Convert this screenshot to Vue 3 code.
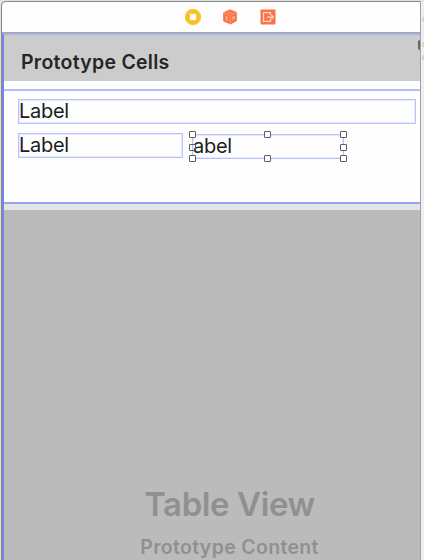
<script setup>
const handles = ['tl', 'tc', 'tr', 'ml', 'mr', 'bl', 'bc', 'br']
</script>

<template>
  <div class="canvas">
    <div class="scene">
      <header class="dock">
        <svg width="18" height="18" viewBox="0 0 18 18">
          <circle cx="9" cy="9" r="8.2" fill="#fbc62f" />
          <circle cx="9" cy="9" r="5.8" fill="none" stroke="#eeb323" stroke-width=".8" />
          <rect x="6" y="6" width="6" height="6" rx=".8" fill="#fff" />
        </svg>
        <svg width="18" height="18" viewBox="0 0 18 18">
          <path d="M8.8 1.8 15.3 4.4V12.8L9.5 16 2.7 13V4.8Z" fill="#fa7448" stroke="#fa7448" stroke-linejoin="round" />
          <path d="M2.8 5 9.3 7.5 15.2 4.7M9.3 7.5V15.8M6 3.6l5.8 2.4" fill="none" stroke="#ffa17e" stroke-width=".8" />
          <path d="M4.5 9l1.4-.2v3.8M11.2 9.6l2-1v1.8l-1.8 1" fill="none" stroke="#ffc8b4" stroke-width="1" />
        </svg>
        <svg width="18" height="18" viewBox="0 0 18 18">
          <rect x="1.5" y="1.5" width="15" height="15" rx=".7" fill="#fa7448" />
          <path d="M11.5 7V4.7h-7v8.6h7V11M8 9h6.3M12.4 7l2 2-2 2" fill="none" stroke="#ffd5c5" stroke-width="1.25" />
        </svg>
      </header>
      <main class="table">
        <div class="section">Prototype Cells</div>
        <div class="gap"></div>
        <section class="cell">
          <div class="label wide"><span>Label</span></div>
          <div class="row">
            <div class="label half"><span>Label</span></div>
            <div class="label selected">
              <span>abel</span>
              <i v-for="h in handles" :key="h" class="handle" :class="h"></i>
            </div>
          </div>
        </section>
        <div class="separator"></div>
        <div class="placeholder">
          <div class="title">Table View</div>
          <div class="subtitle">Prototype Content</div>
        </div>
      </main>
    </div>
    <aside class="gutter">
      <i class="notch"></i>
      <i class="dot one"></i>
      <i class="dot two"></i>
      <i class="dot three"></i>
    </aside>
  </div>
</template>

<style>
body { overflow: hidden; }
</style>

<style scoped>
* { box-sizing: border-box; }
.canvas { width: 424px; height: 560px; display: flex; padding-top: 1px; padding-left: 1px; background: #e2e2e2; font-family: Inter, "Liberation Sans", sans-serif; overflow: hidden; }
.scene { width: 420px; height: 559px; display: flex; flex-direction: column; border: 1px solid #888; border-right-color: #a0a0a0; border-bottom: 0; border-top-left-radius: 5px; background: #fefefe; overflow: hidden; }
.dock { height: 31px; flex: none; display: flex; gap: 19.4px; padding: 6px 0 0 182px; border-bottom: 1px solid #a3a3a8; }
.dock svg { flex: none; }
.table { flex: 1; display: flex; flex-direction: column; border-left: 2px solid #7187e4; border-top: 2px solid #a9b2e2; }
.section { height: 46px; flex: none; padding-left: 17px; background: #ccc; color: #262626; font-size: 19.5px; font-weight: 600; line-height: 54px; letter-spacing: .27px; white-space: nowrap; }
.gap { height: 8px; flex: none; }
.cell { height: 115px; flex: none; padding: 8px 0 0 14px; border-top: 2px solid #b5c0fb; border-bottom: 2px solid #96a6f2; }
.label { height: 25px; border: 1px solid #b8c3fb; outline: 1px solid #e5e9fe; outline-offset: -2px; color: #1c1c1c; font-size: 20px; line-height: 23px; letter-spacing: -.3px; white-space: nowrap; }
.wide { width: 398px; }
.row { display: flex; gap: 9px; padding-top: 9px; }
.half { width: 165px; }
.selected { position: relative; width: 152px; margin-top: 1px; }
.handle { position: absolute; width: 7px; height: 7px; border: 1px solid #5c5c5c; background: #fff; border-radius: 1px; }
.tl { left: -4px; top: -4px; }
.tc { left: 71px; top: -4px; }
.tr { right: -4px; top: -4px; }
.ml { left: -4px; top: 9px; background: transparent; }
.mr { right: -4px; top: 9px; }
.bl { left: -4px; bottom: -4px; }
.bc { left: 71px; bottom: -4px; }
.br { right: -4px; bottom: -4px; }
.separator { height: 6px; flex: none; background: #e5e5e5; }
.placeholder { flex: 1; display: flex; flex-direction: column; align-items: center; padding: 274px 0 0 35px; background: #bbb; color: #909090; font-weight: 600; white-space: nowrap; }
.title { font-size: 33px; line-height: 40px; letter-spacing: -.4px; }
.subtitle { margin-top: 3px; font-size: 19.5px; line-height: 40px; letter-spacing: .33px; }
.gutter { position: relative; width: 3px; background: #efefef; }
.notch { position: absolute; left: -3px; top: 39px; width: 2px; height: 10px; background: #666; border-radius: 2px 0 0 2px; }
.dot { position: absolute; left: 1px; width: 5px; height: 5px; border: 1px solid #bbb; border-radius: 50%; }
.one { top: 16px; }
.two { top: 41px; }
.three { top: 54px; }
</style>
